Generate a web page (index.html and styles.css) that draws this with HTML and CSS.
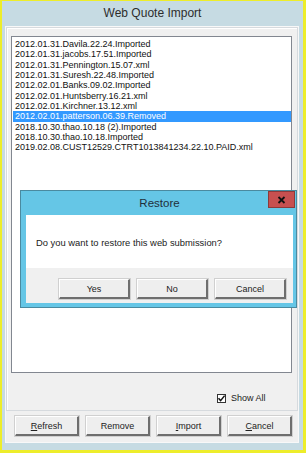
FILE: index.html
```html
<!DOCTYPE html>
<html>
<head>
<meta charset="utf-8">
<link rel="stylesheet" href="styles.css">
</head>
<body>
<div class="frame">
  <div class="title">Web Quote Import</div>
  <div class="client">
    <div class="panel">
      <div class="listbox">
        <div class="item">2012.01.31.Davila.22.24.Imported</div>
        <div class="item">2012.01.31.jacobs.17.51.Imported</div>
        <div class="item">2012.01.31.Pennington.15.07.xml</div>
        <div class="item">2012.01.31.Suresh.22.48.Imported</div>
        <div class="item">2012.02.01.Banks.09.02.Imported</div>
        <div class="item">2012.02.01.Huntsberry.16.21.xml</div>
        <div class="item">2012.02.01.Kirchner.13.12.xml</div>
        <div class="item selected">2012.02.01.patterson.06.39.Removed</div>
        <div class="item">2018.10.30.thao.10.18 (2).Imported</div>
        <div class="item">2018.10.30.thao.10.18.Imported</div>
        <div class="item">2019.02.08.CUST12529.CTRT1013841234.22.10.PAID.xml</div>
      </div>
      <div class="check-row">
        <span class="checkbox"><svg width="9" height="9" viewBox="0 0 9 9"><path d="M1.5 4.2 L3.6 6.6 L7.6 1.6" fill="none" stroke="#111" stroke-width="1.5"/></svg></span>
        <span class="check-label">Show All</span>
      </div>
    </div>
    <div class="buttons">
      <div class="btn"><u>R</u>efresh</div>
      <div class="btn">Remove</div>
      <div class="btn"><u>I</u>mport</div>
      <div class="btn"><u>C</u>ancel</div>
    </div>
  </div>
  <div class="dialog">
    <div class="dlg-title">Restore
      <div class="close"><svg width="9" height="8" viewBox="0 0 9 8"><path d="M1.5 1 L7.5 7 M7.5 1 L1.5 7" stroke="#111" stroke-width="1.8"/></svg></div>
    </div>
    <div class="dlg-body">Do you want to restore this web submission?</div>
    <div class="dlg-buttons">
      <div class="btn dbtn">Yes</div>
      <div class="btn dbtn">No</div>
      <div class="btn dbtn">Cancel</div>
    </div>
  </div>
</div>
</body>
</html>
```
FILE: styles.css
```css
html, body {
  margin: 0;
  padding: 0;
  background: #eded2a;
  width: 306px;
  height: 453px;
  overflow: hidden;
  font-family: "Liberation Sans", Arial, sans-serif;
}
.frame {
  position: relative;
  margin: 1px 3px 0 2px;
  width: 301px;
  height: 449px;
  background: #c6dbe3;
  display: flex;
  flex-direction: column;
}
.title {
  height: 25px;
  line-height: 25px;
  text-align: center;
  font-size: 12px;
  color: #2d2d2d;
}
.client {
  margin: 0 4px 0 3px;
  height: 415px;
  background: #f0f0f0;
  border: 1px solid #f8f8f8;
  display: flex;
  flex-direction: column;
}
.panel {
  height: 374px;
  border: 1px solid #d6dade;
  box-shadow: inset 1px 1px 0 #ffffff;
  padding: 8px 5px 0 4px;
  display: flex;
  flex-direction: column;
}
.listbox {
  height: 333px;
  background: #ffffff;
  border: 1px solid #828790;
  padding: 2px 0 0 2px;
  font-size: 9px;
  color: #111;
}
.item {
  height: 10.35px;
  line-height: 10.35px;
  padding-left: 1px;
  white-space: nowrap;
}
.item.selected {
  background: #3399ff;
  color: #ffffff;
  margin-left: -1px;
  padding-left: 2px;
}
.check-row {
  display: flex;
  align-items: center;
  margin-top: 20px;
  padding-left: 206px;
  height: 10px;
}
.checkbox {
  width: 9px;
  height: 9px;
  border: 1px solid #333;
  background: #fff;
  box-sizing: border-box;
  display: flex;
  align-items: center;
  justify-content: center;
}
.checkbox svg { display: block; margin: -1px; }
.check-label {
  margin-left: 5px;
  font-size: 9px;
  color: #222;
}
.buttons {
  display: flex;
  gap: 7px;
  padding: 5px 0 0 9px;
}
.btn {
  box-sizing: border-box;
  width: 64px;
  height: 20px;
  background: #eeeeee;
  border-top: 1px solid #ffffff;
  border-left: 1px solid #ffffff;
  border-right: 2px solid #6e6e6e;
  border-bottom: 2px solid #6e6e6e;
  box-shadow: 0 0 0 1px #d0d0d0;
  display: flex;
  align-items: center;
  justify-content: center;
  font-size: 9px;
  color: #222;
}
.btn u { text-decoration: underline; }
.dialog {
  position: absolute;
  left: 18px;
  top: 189px;
  width: 277px;
  height: 118px;
  box-sizing: border-box;
  background: #65c6e6;
  border: 1px solid #4a8aa0;
  padding: 0 3px 4px 5px;
  display: flex;
  flex-direction: column;
}
.dlg-title {
  position: relative;
  height: 24px;
  line-height: 24px;
  text-align: center;
  font-size: 11.5px;
  color: #1f2f3a;
}
.close {
  position: absolute;
  right: -2px;
  top: 0;
  width: 27px;
  height: 17px;
  background: #c75050;
  border: 1px solid #8c3a3a;
  box-sizing: border-box;
  display: flex;
  align-items: center;
  justify-content: center;
}
.close svg { display: block; }
.dlg-body {
  height: 53px;
  background: #ffffff;
  box-sizing: border-box;
  padding: 22px 0 0 10px;
  font-size: 9.4px;
  color: #222;
}
.dlg-buttons {
  flex: 1;
  background: #f0f0f0;
  display: flex;
  justify-content: flex-end;
  gap: 7px;
  padding: 11px 7px 0 0;
}
.dbtn {
  width: 71px;
  height: 20px;
}
```
